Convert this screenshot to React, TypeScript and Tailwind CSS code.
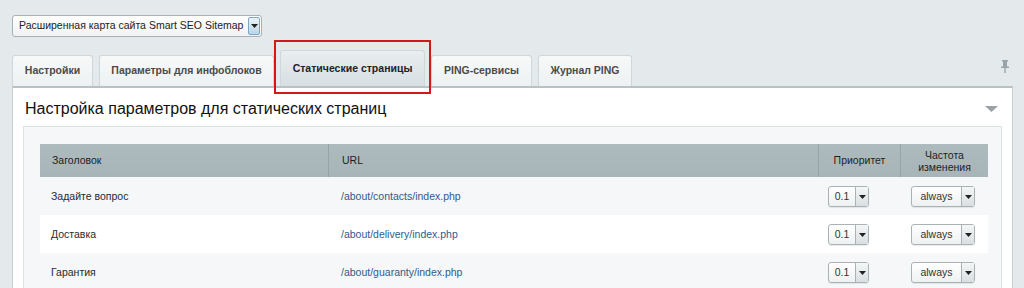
import React from "react";

const Arrow = () => (
  <svg width="7" height="4" viewBox="0 0 7 4"><path d="M0 0h7L3.5 4z" fill="#222" /></svg>
);

function MiniSelect({ value, w }: { value: string; w: string }) {
  return (
    <div className={`flex h-[21px] ${w} rounded-[3px] border border-[#a9b3b6] bg-gradient-to-b from-white to-[#eef1f2] shadow-[0_1px_1px_rgba(0,0,0,0.08)]`}>
      <div className="flex flex-1 items-center justify-center text-[10.5px] text-[#333]">{value}</div>
      <div className="flex w-[13px] items-center justify-center border-l border-[#a9b3b6] bg-gradient-to-b from-[#f4f6f7] to-[#d9dfe1]">
        <Arrow />
      </div>
    </div>
  );
}

const rows = [
  { t: "Задайте вопрос", u: "/about/contacts/index.php", bg: "" },
  { t: "Доставка", u: "/about/delivery/index.php", bg: "bg-white" },
  { t: "Гарантия", u: "/about/guaranty/index.php", bg: "" },
];

const tabs = [
  { t: "Настройки", w: "w-[81px]" },
  { t: "Параметры для инфоблоков", w: "w-[175px]" },
  { t: "Статические страницы", w: "w-[145px]" },
  { t: "PING-сервисы", w: "w-[101px]" },
  { t: "Журнал PING", w: "w-[94px]" },
];

export default function App() {
  return (
    <div className="h-[288px] w-[1024px] overflow-hidden bg-[#e4eaec] pl-[12px] pt-[15px] font-['Liberation_Sans',Arial,sans-serif]">
      {/* top select */}
      <div className="flex h-[22px] w-[250px] rounded-[3px] border border-[#a6b2b7] bg-gradient-to-b from-white to-[#f1f3f4]">
        <div className="flex flex-1 items-center whitespace-nowrap pl-[6px] text-[10.5px] text-[#222]">Расширенная карта сайта Smart SEO Sitemap</div>
        <div className="my-[1px] mr-[1px] flex w-[12px] items-center justify-center rounded-[2px] border border-[#7fa6c4] bg-gradient-to-b from-[#e9f3fa] to-[#b9d6ec]">
          <Arrow />
        </div>
      </div>

      {/* tabs row */}
      <div className="mt-[17px] flex h-[32px] items-end gap-[6px] pr-[12px]">
        {tabs.map((tab, i) => {
          const active = i === 2;
          return (
            <div key={tab.t} className="relative">
              {active && (
                <div className="absolute -left-[6px] -right-[6px] -top-[10px] bottom-[-8px] border-2 border-[#d3171c]" />
              )}
              <div
                className={`flex items-center justify-center whitespace-nowrap rounded-t-[3px] border border-b-0 border-[#cfd7da] ${tab.w} text-[10.5px] font-bold ${
                  active
                    ? "h-[36px] bg-gradient-to-b from-[#e9eef0] to-[#d7dfe2] text-[#222]"
                    : "h-[31px] bg-gradient-to-b from-[#f7f9f9] to-[#edf1f2] text-[#4a4a4a]"
                }`}
              >
                {tab.t}
              </div>
            </div>
          );
        })}
        <div className="flex-1" />
        <div className="mb-[13px] mr-[3px]">
          <svg width="8" height="13" viewBox="0 0 8 13">
            <rect x="1" y="0" width="6" height="1.5" fill="#9aa4a8" />
            <rect x="2" y="1" width="4" height="6" fill="#9aa4a8" />
            <rect x="0" y="6.5" width="8" height="1.5" fill="#9aa4a8" />
            <rect x="3.3" y="8" width="1.4" height="5" fill="#9aa4a8" />
          </svg>
        </div>
      </div>

      {/* panel */}
      <div className="mr-[11px] border border-t-2 border-[#c6ced1] border-t-[#b8c2c5] bg-white pl-[10px] pr-[10px]">
        <div className="flex h-[38px] items-center justify-between pt-[3px]">
          <div className="pl-[2px] text-[16px] text-[#111]">Настройка параметров для статических страниц</div>
          <svg width="13" height="6" viewBox="0 0 13 6" className="mr-[4px]"><path d="M0 0h13L6.5 6z" fill="#9aa2a6" /></svg>
        </div>
        <div className="border border-[#dde3e5] bg-[#f5f7f8] px-[16px] pt-[17px] pb-[20px]">
          <div className="grid grid-cols-[288px_490px_82px_88px] text-[10.5px]">
            <div className="flex h-[33px] items-center bg-gradient-to-b from-[#aebbbe] to-[#a7b5b8] pl-[12px] text-[#1e1e1e]">Заголовок</div>
            <div className="flex h-[33px] items-center border-l border-[#95a4a8] bg-gradient-to-b from-[#aebbbe] to-[#a7b5b8] pl-[13px] text-[#1e1e1e]">URL</div>
            <div className="flex h-[33px] items-center justify-center border-l border-[#95a4a8] bg-gradient-to-b from-[#aebbbe] to-[#a7b5b8] text-[#1e1e1e]">Приоритет</div>
            <div className="flex h-[33px] items-center justify-center border-l border-[#95a4a8] bg-gradient-to-b from-[#aebbbe] to-[#a7b5b8] text-center leading-[12px] text-[#1e1e1e]">Частота<br />изменения</div>
            {rows.map((r) => (
              <React.Fragment key={r.t}>
                <div className={`flex h-[38px] items-center pl-[11px] pt-[1px] text-[#2a2a2a] ${r.bg}`}>{r.t}</div>
                <div className={`flex h-[38px] items-center pl-[13px] pt-[1px] text-[#2f5b8d] ${r.bg}`}>{r.u}</div>
                <div className={`flex h-[38px] items-center pl-[10px] pt-[1px] ${r.bg}`}>
                  <MiniSelect value="0.1" w="w-[41px]" />
                </div>
                <div className={`flex h-[38px] items-center pl-[11px] pt-[1px] ${r.bg}`}>
                  <MiniSelect value="always" w="w-[64px]" />
                </div>
              </React.Fragment>
            ))}
          </div>
        </div>
      </div>
    </div>
  );
}
